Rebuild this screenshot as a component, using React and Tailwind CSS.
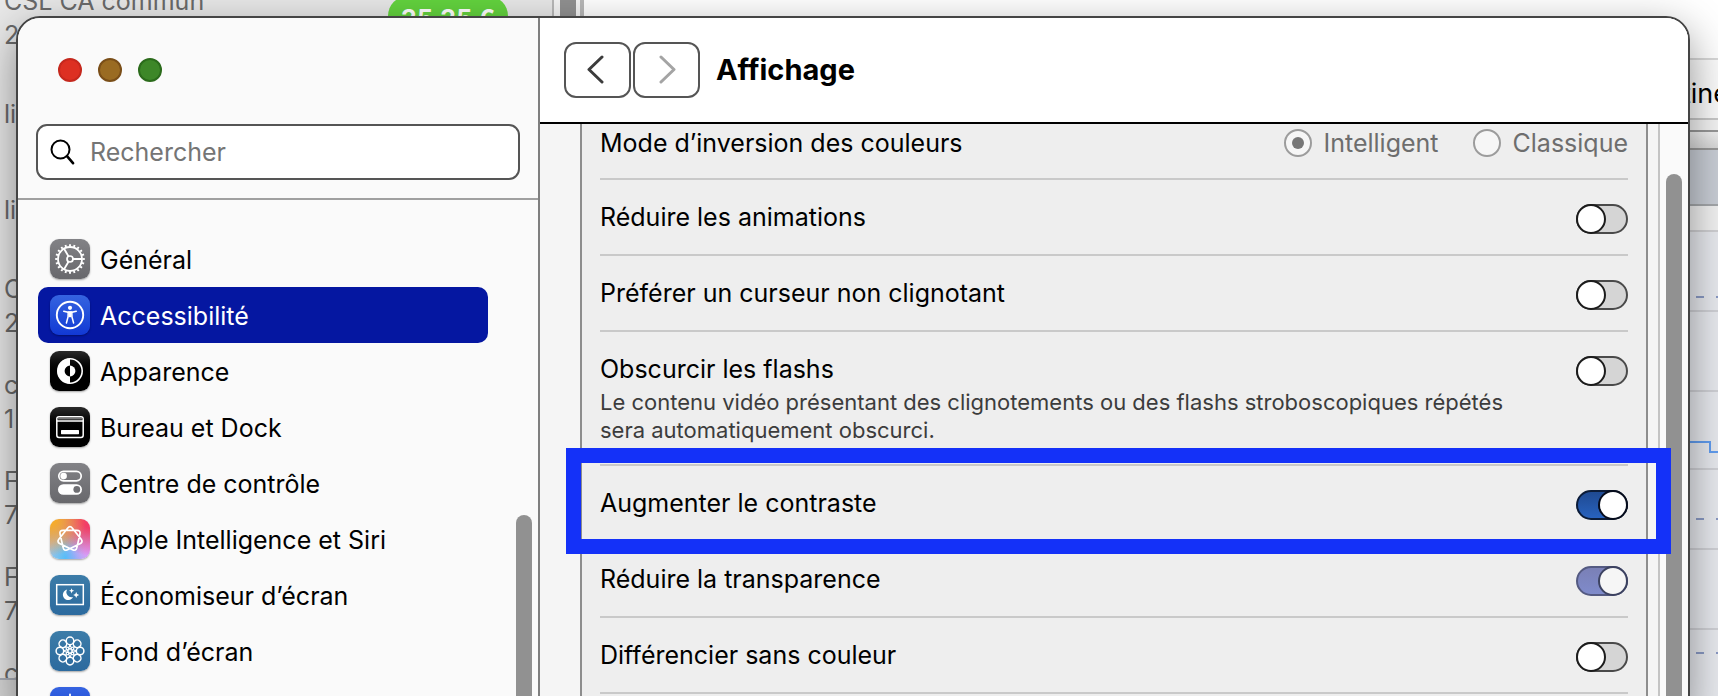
import React from "react";

const svgBase = { fill: "none", stroke: "white", strokeLinecap: "round", strokeLinejoin: "round" };

function polar(r, deg) {
  const a = (deg * Math.PI) / 180;
  return [20 + r * Math.sin(a), 20 - r * Math.cos(a)];
}

function GearIcon() {
  const teeth = Array.from({ length: 20 }, (_, i) => [polar(12.6, i * 18), polar(14.8, i * 18)]);
  return (
    <svg viewBox="0 0 40 40" className="size-10" {...svgBase}>
      <circle cx="20" cy="20" r="12" strokeWidth="1.8" />
      <circle cx="20" cy="20" r="3" strokeWidth="1.7" />
      {teeth.map(([a, b], i) => (
        <line key={i} x1={a[0]} y1={a[1]} x2={b[0]} y2={b[1]} strokeWidth="1.9" strokeLinecap="butt" />
      ))}
      {[90, 210, 330].map((d) => {
        const a = polar(3.4, d);
        const b = polar(11.5, d);
        return <line key={d} x1={a[0]} y1={a[1]} x2={b[0]} y2={b[1]} strokeWidth="1.8" />;
      })}
    </svg>
  );
}

function AccessibilityIcon() {
  return (
    <svg viewBox="0 0 40 40" className="size-10" {...svgBase}>
      <circle cx="20" cy="20" r="13.2" strokeWidth="1.9" />
      <circle cx="20" cy="12.8" r="2.1" fill="white" stroke="none" />
      <path d="M13.8 16.3 L18 17.3 H22 L26.2 16.3" strokeWidth="1.6" />
      <path d="M18.2 17 H21.8 L22 22 L23.6 28 M18.2 17 L18 22 L16.4 28" strokeWidth="1.5" />
      <path d="M18.4 17.2h3.2v5h-3.2z" fill="white" stroke="none" />
    </svg>
  );
}

function AppearanceIcon() {
  return (
    <svg viewBox="0 0 40 40" className="size-10" {...svgBase}>
      <circle cx="20" cy="20" r="12.2" strokeWidth="1.6" />
      <path d="M20 7.5 A12.5 12.5 0 0 0 20 32.5 Z" fill="white" stroke="none" />
      <path d="M20 14.6 A5.4 5.4 0 0 0 20 25.4 Z" fill="black" stroke="none" />
      <path d="M20 14.6 A5.4 5.4 0 0 1 20 25.4 Z" fill="white" stroke="none" />
    </svg>
  );
}

function DockIcon() {
  return (
    <svg viewBox="0 0 40 40" className="size-10" {...svgBase}>
      <rect x="6.8" y="9.8" width="26.4" height="20.6" rx="2.2" strokeWidth="1.5" />
      <path d="M8 11.7 H32" stroke="#777" strokeWidth="1.6" />
      <path d="M7 14 H33" strokeWidth="1.4" />
      <rect x="11" y="23" width="18" height="4.2" rx="0.6" fill="white" stroke="none" />
    </svg>
  );
}

function ControlCenterIcon() {
  return (
    <svg viewBox="0 0 40 40" className="size-10" {...svgBase}>
      <rect x="8.8" y="8.4" width="22.4" height="9.4" rx="4.7" strokeWidth="1.7" />
      <circle cx="13.6" cy="13.1" r="3.3" fill="white" stroke="none" />
      <rect x="8" y="21.2" width="24" height="10.6" rx="5.3" fill="white" stroke="none" />
      <circle cx="26.8" cy="26.4" r="3.4" fill="#6f6f73" stroke="none" />
    </svg>
  );
}

// Seven-pointed star whose tips are rounded off into overlapping loops.
function starPath(radius, cut) {
  const vertex = (k) => polar(radius, (k * 2 * 360) / 7);
  const lerp = (a, b) => [a[0] + (b[0] - a[0]) * cut, a[1] + (b[1] - a[1]) * cut];
  let d = "";
  for (let k = 0; k < 7; k++) {
    const v = vertex(k);
    const a = lerp(v, vertex(k + 6));
    const b = lerp(v, vertex(k + 1));
    d += (k === 0 ? "M" : "L") + a.join(" ") + "Q" + v.join(" ") + " " + b.join(" ");
  }
  return d + "Z";
}

function IntelligenceIcon() {
  return (
    <svg viewBox="0 0 40 40" className="size-10" {...svgBase}>
      <path d={starPath(13.8, 0.18)} strokeWidth="1.7" />
    </svg>
  );
}

function ScreenSaverIcon() {
  return (
    <svg viewBox="0 0 40 40" className="size-10" {...svgBase}>
      <rect x="6.7" y="9.7" width="26.6" height="19.8" strokeWidth="1.5" strokeLinejoin="miter" />
      <path d="M17.2 14.6 A5.3 5.3 0 1 0 23 22 A5 5 0 0 1 17.2 14.6 Z" fill="white" stroke="none" />
      <path d="M21.6 13.2 l0.7 1.9 1.9 0.7 -1.9 0.7 -0.7 1.9 -0.7 -1.9 -1.9 -0.7 1.9 -0.7z" fill="white" stroke="none" />
      <path d="M26.2 17 l0.9 2.1 2.1 0.9 -2.1 0.9 -0.9 2.1 -0.9 -2.1 -2.1 -0.9 2.1 -0.9z" fill="white" stroke="none" />
    </svg>
  );
}

function WallpaperIcon() {
  return (
    <svg viewBox="0 0 40 40" className="size-10" {...svgBase}>
      {Array.from({ length: 8 }, (_, i) => (
        <g key={i} transform={"rotate(" + i * 45 + " 20 20)"} strokeWidth="1.5">
          <circle cx="20" cy="9.9" r="3.8" />
          <path d="M20 13.7 L18.7 16.6 L20 18.4 L21.3 16.6 Z" strokeWidth="1.1" />
        </g>
      ))}
    </svg>
  );
}

function BrightnessIcon() {
  return (
    <svg viewBox="0 0 40 40" className="size-10" {...svgBase}>
      <circle cx="20" cy="20" r="5.5" strokeWidth="1.8" />
      {Array.from({ length: 8 }, (_, i) => {
        const a = polar(9.5, i * 45);
        const b = polar(12.5, i * 45);
        return <line key={i} x1={a[0]} y1={a[1]} x2={b[0]} y2={b[1]} strokeWidth="1.8" />;
      })}
    </svg>
  );
}

const navItems = [
  { label: "Général", icon: GearIcon, tile: "bg-linear-to-b from-[#828286] to-[#68686c]" },
  { label: "Accessibilité", icon: AccessibilityIcon, tile: "bg-linear-to-b from-[#3563e0] to-[#1238d4]", selected: true },
  { label: "Apparence", icon: AppearanceIcon, tile: "bg-linear-to-b from-[#2a2a2a] to-black to-60%" },
  { label: "Bureau et Dock", icon: DockIcon, tile: "bg-linear-to-b from-[#2a2a2a] to-black to-60%" },
  { label: "Centre de contrôle", icon: ControlCenterIcon, tile: "bg-linear-to-b from-[#828286] to-[#68686c]" },
  {
    label: "Apple Intelligence et Siri",
    icon: IntelligenceIcon,
    tile: "bg-[radial-gradient(circle_at_0%_0%,#f5ab2b_10%,transparent_65%),radial-gradient(circle_at_100%_0%,#f23c68_15%,transparent_65%),radial-gradient(circle_at_100%_80%,#d79cf8_10%,transparent_50%),radial-gradient(circle_at_50%_100%,#56bdf8_10%,transparent_55%),linear-gradient(#c88f9c,#a9cbe8)]",
  },
  { label: "Économiseur d’écran", icon: ScreenSaverIcon, tile: "bg-linear-to-b from-[#3c7ca8] to-[#2c6a9e]" },
  { label: "Fond d’écran", icon: WallpaperIcon, tile: "bg-linear-to-b from-[#3c7ca8] to-[#2c6a9e]" },
  { label: "Moniteurs", icon: BrightnessIcon, tile: "bg-linear-to-b from-[#3563e0] to-[#1238d4]", iconOnly: true },
];

function Sidebar() {
  return (
    <aside className="flex w-[522px] shrink-0 flex-col border-r-2 border-[#7f7f7f] bg-[#fafafa]">
      <div className="flex h-[106px] shrink-0 items-center gap-4 pb-0.5 pl-10">
        <button type="button" aria-label="Fermer" className="size-6 rounded-full border-2 border-[#c5281d] bg-[#dd3022]" />
        <button type="button" aria-label="Réduire" className="size-6 rounded-full border-2 border-[#7a4e18] bg-[#9a6b22]" />
        <button type="button" aria-label="Agrandir" className="size-6 rounded-full border-2 border-[#2b6b1b] bg-[#3d8728]" />
      </div>
      <div className="h-[76px] shrink-0 border-b-2 border-[#a0a0a0] px-[18px]">
        <label className="flex h-14 items-center gap-3.5 rounded-[11px] border-2 border-[#555] bg-white pl-3">
          <svg viewBox="0 0 26 26" className="size-[26px] shrink-0" fill="none" stroke="black" strokeWidth="2">
            <circle cx="10.5" cy="10.5" r="9" />
            <path d="M17 17.2 L23 24.2" strokeWidth="2.6" strokeLinecap="round" />
          </svg>
          <input
            type="text"
            aria-label="Rechercher"
            placeholder="Rechercher"
            className="min-w-0 flex-1 bg-transparent pt-0.5 text-[25px] outline-none placeholder:text-[#757575]"
          />
        </label>
      </div>
      <div className="flex min-h-0 flex-1">
        <nav className="min-w-0 flex-1 overflow-hidden pt-[31px] pl-5">
          {navItems.map(({ label, icon: Icon, tile, selected, iconOnly }) => (
            <a
              key={label}
              href="#"
              aria-label={label}
              className={
                selected
                  ? "flex h-14 items-center gap-2.5 rounded-[10px] bg-[#0517a1] pl-3 text-white"
                  : "flex h-14 items-center gap-2.5 rounded-[10px] pl-3 text-black"
              }
            >
              <span className={"size-10 shrink-0 rounded-[9px] shadow-[0_1px_2px_rgba(0,0,0,0.35)] " + tile}>
                <Icon />
              </span>
              {!iconOnly && <span className="truncate pt-0.5 text-[25px] leading-8">{label}</span>}
            </a>
          ))}
        </nav>
        <div className="ml-7 flex w-[22px] shrink-0 overflow-hidden pt-[315px]">
          <div className="w-4 rounded-t-full bg-[#919191]" />
        </div>
      </div>
    </aside>
  );
}

function Toggle({ id, state }) {
  const track = {
    off: "bg-[#d5d5d5] border-[#4a4a4a]",
    on: "bg-linear-to-b from-[#1f4a92] to-[#2862be] border-[#0c1c38]",
    dimmed: "bg-linear-to-b from-[#7a80b6] to-[#7f8bcb] border-[#545a82]",
  }[state];
  const knob = {
    off: "-left-0.5 border-[#1c1c1c] bg-white",
    on: "-right-0.5 border-[#060c1c] bg-white",
    dimmed: "-right-0.5 border-[#3c4260] bg-[#f6f6f6]",
  }[state];
  return (
    <span className={"relative mt-6 h-[30px] w-[52px] shrink-0 rounded-full border-2 " + track}>
      <span className={"absolute -top-0.5 size-[30px] rounded-full border-2 " + knob} />
      <input
        id={id}
        type="checkbox"
        role="switch"
        defaultChecked={state !== "off"}
        disabled={state === "dimmed"}
        className="absolute inset-0 size-full opacity-0"
      />
    </span>
  );
}

function Row({ id, label, state, note, highlighted }) {
  return (
    <div className="relative flex min-h-[76px] items-start justify-between gap-4 border-b-2 border-[#c9c9c9]">
      <div className="max-w-[940px] pt-5 pb-5">
        <label htmlFor={id} className="block text-[25px] leading-[34px]">
          {label}
        </label>
        {note && <p className="pt-0.5 text-[22px] leading-7 text-[#3c3c3c]">{note}</p>}
      </div>
      <Toggle id={id} state={state} />
      {highlighted && (
        <div className="pointer-events-none absolute -top-[18px] -right-[43px] -bottom-[14px] -left-[34px] border-[15px] border-[#1431f8]" />
      )}
    </div>
  );
}

function Radio({ label, checked }) {
  return (
    <label className="flex items-center gap-3 text-[25px] leading-[34px] text-[#6d6d6d]">
      <input
        type="radio"
        name="inversion"
        defaultChecked={checked}
        disabled
        className="grid size-7 appearance-none place-items-center rounded-full border-2 border-[#9c9c9c] bg-[#f6f6f6] before:size-3 before:rounded-full checked:before:bg-[#777]"
      />
      {label}
    </label>
  );
}

function Content() {
  return (
    <main className="flex min-w-0 flex-1 flex-col bg-[#f5f5f5]">
      <header className="flex h-[106px] shrink-0 items-center gap-4 border-b-2 border-black bg-white pl-6">
        <div className="flex gap-0.5">
          <button type="button" aria-label="Précédent" className="flex h-14 w-[67px] items-center justify-center rounded-xl border-2 border-[#555] pr-1">
            <svg viewBox="0 0 18 30" className="h-[30px] w-[18px]" fill="none" stroke="#3c3c3c" strokeWidth="3" strokeLinecap="round" strokeLinejoin="round">
              <path d="M15 2 L2 14.5 L15 27" />
            </svg>
          </button>
          <button type="button" disabled aria-label="Suivant" className="flex h-14 w-[67px] items-center justify-center rounded-xl border-2 border-[#555]">
            <svg viewBox="0 0 18 30" className="h-[30px] w-[18px]" fill="none" stroke="#a4a4a4" strokeWidth="3" strokeLinecap="round" strokeLinejoin="round">
              <path d="M3 2 L16 14.5 L3 27" />
            </svg>
          </button>
        </div>
        <h1 className="text-[29px] leading-9 font-bold">Affichage</h1>
      </header>
      <div className="flex h-[572px]">
        <section className="mr-2.5 ml-10 min-w-0 flex-1 border-x-2 border-[#8d8d8d] bg-[#eee] px-[18px]">
          <div className="flex h-14 items-start justify-between border-b-2 border-[#c9c9c9] pt-0.5">
            <span className="text-[25px] leading-[34px]">Mode d’inversion des couleurs</span>
            <div className="flex gap-[34px]">
              <Radio label="Intelligent" checked />
              <Radio label="Classique" />
            </div>
          </div>
          <Row id="animations" label="Réduire les animations" state="off" />
          <Row id="curseur" label="Préférer un curseur non clignotant" state="off" />
          <Row
            id="flashs"
            label="Obscurcir les flashs"
            state="off"
            note="Le contenu vidéo présentant des clignotements ou des flashs stroboscopiques répétés sera automatiquement obscurci."
          />
          <Row id="contraste" label="Augmenter le contraste" state="on" highlighted />
          <Row id="transparence" label="Réduire la transparence" state="dimmed" />
          <Row id="couleur" label="Différencier sans couleur" state="off" />
        </section>
        <div className="w-[30px] shrink-0 border-l-2 border-[#c4c4c4] bg-[#fafafa] pt-[50px] pl-1.5">
          <div className="h-full w-4 rounded-t-full bg-[#919191]" />
        </div>
      </div>
    </main>
  );
}

const listing = [
  { text: "2", top: "top-[19px]" },
  { text: "li", top: "top-[98px]" },
  { text: "li", top: "top-[194px]" },
  { text: "C", top: "top-[273px]" },
  { text: "2", top: "top-[307px]" },
  { text: "c", top: "top-[369px]" },
  { text: "1", top: "top-[403px]" },
  { text: "F", top: "top-[465px]" },
  { text: "7", top: "top-[499px]" },
  { text: "F", top: "top-[561px]" },
  { text: "7", top: "top-[595px]" },
  { text: "c", top: "top-[657px]" },
];

function BackWindows() {
  return (
    <div className="absolute inset-0 flex">
      <div className="relative w-[552px] shrink-0 bg-[#e8e8e8] text-[25px] leading-8 text-[#6a6a6a]">
        <span className="absolute -top-[15px] left-1">CSL CA commun</span>
        {listing.map(({ text, top }) => (
          <span key={top} className={"absolute left-1 " + top}>{text}</span>
        ))}
        <span className="absolute -top-1 left-[388px] flex h-10 w-[120px] justify-center rounded-full bg-[#63d33e] pt-[7px] text-[25px] font-bold text-white">
          35,35 €
        </span>
        <span className="absolute top-[678px] bottom-0 left-0 w-4 border-t-2 border-[#a9adb6] bg-[#d8d8d8]" />
      </div>
      <div className="flex w-8 shrink-0 justify-between border-x-2 border-r-4 border-[#b8b8b8] bg-[#f4f4f4] pr-1 pl-1.5">
        <div className="w-4 bg-[#919191]" />
      </div>
      <div className="flex min-w-0 flex-1 flex-col items-end overflow-hidden bg-white">
        <div className="h-[60px] w-full shrink-0 border-b-2 border-[#d8d8d8]" />
        <div className="h-[60px] w-full shrink-0 overflow-hidden border-b-2 border-[#c8c8c8] bg-[#fbfbfb]">
          <p className="flex h-full items-center justify-end pt-2.5 text-[27px] leading-8 text-black">
            <span className="w-9 whitespace-nowrap">tine</span>
          </p>
        </div>
        <div className="h-3 w-full shrink-0 border-b-2 border-[#989898] bg-[#f4f4f4]" />
        <div className="h-[18px] w-full shrink-0 border-b-2 border-[#989898] bg-linear-to-b from-[#f0f0f0] to-[#d8d8d8]" />
        <div className="h-14 w-full shrink-0 border-b-2 border-[#a5a8ab] bg-[#c9ced6]" />
        <div className="h-[26px] w-full shrink-0 border-b-2 border-[#d0d0d3] bg-[#f2f2f2]" />
        <svg viewBox="0 0 40 464" className="h-[464px] w-10 shrink-0 bg-[#e8eaef]" fill="none">
          <path d="M0 79h40M0 159h40M0 237h40M0 317h40M0 397h40" stroke="#d0d1d6" strokeWidth="2" />
          <path d="M18 65h8M38 65h8M18 287h8M38 287h8M18 421h8M38 421h8" stroke="#8a9ac4" strokeWidth="2" />
          <path d="M0 210h32v10h8" stroke="#619df0" strokeWidth="2" />
        </svg>
      </div>
    </div>
  );
}

export default function App() {
  return (
    <div className="relative h-screen overflow-hidden bg-[#e4e4e4] font-[Inter,'Noto_Sans',sans-serif] text-black">
      <BackWindows />
      <div className="relative flex h-full pt-4 pr-7 pl-4">
        <div className="-mb-4 flex min-w-0 flex-1 overflow-hidden rounded-t-[24px] border-2 border-[#444] bg-[#fafafa] shadow-[0_14px_44px_rgba(0,0,0,0.42)]">
          <Sidebar />
          <Content />
        </div>
      </div>
    </div>
  );
}
